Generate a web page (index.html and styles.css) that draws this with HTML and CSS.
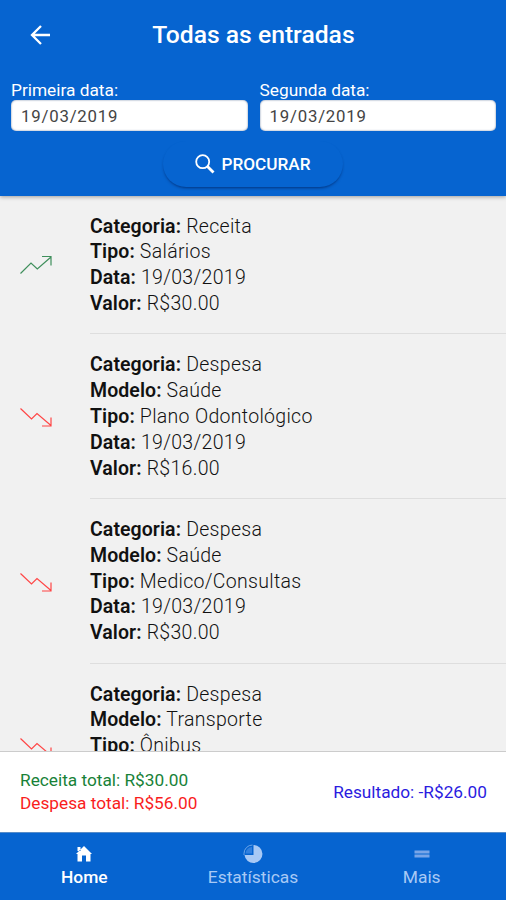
FILE: index.html
```html
<!DOCTYPE html>
<html lang="pt-BR">
<head>
<meta charset="utf-8">
<title>Todas as entradas</title>
<link rel="stylesheet" href="styles.css">
</head>
<body>
<svg class="defs" width="0" height="0">
  <symbol id="up" viewBox="0 0 34 22"><path d="M1.500 19.500 12 9l6.300 6L32 3M23 2.500h9V11.500"/></symbol>
  <symbol id="down" viewBox="0 0 34 22"><path d="M1.500 2.500 12.500 13l5.500-5.500L32 19.500M23 20h9V11.500"/></symbol>
</svg>
<div class="app">
  <header class="header">
    <div class="title-bar">
      <svg class="back" viewBox="0 0 20 20"><path d="M20 10H2M11 1 2 10l9 9"/></svg>
      <h1>Todas as entradas</h1>
    </div>
    <div class="dates">
      <label class="field"><span>Primeira data:</span><span class="date">19/03/2019</span></label>
      <label class="field"><span>Segunda data:</span><span class="date">19/03/2019</span></label>
    </div>
    <button class="search">
      <svg viewBox="0 0 20 20"><circle cx="7.700" cy="7.700" r="6.500"/><path class="handle" d="m12.500 12.500 6 6"/></svg>
      <span>PROCURAR</span>
    </button>
  </header>
  <main class="list">
    <article class="item">
      <svg class="trend income"><use href="#up"/></svg>
      <div class="info">
        <p><b>Categoria:</b> Receita</p>
        <p><b>Tipo:</b> Salários</p>
        <p><b>Data:</b> 19/03/2019</p>
        <p><b>Valor:</b> R$30.00</p>
      </div>
    </article>
    <article class="item">
      <svg class="trend expense"><use href="#down"/></svg>
      <div class="info">
        <p><b>Categoria:</b> Despesa</p>
        <p><b>Modelo:</b> Saúde</p>
        <p><b>Tipo:</b> Plano Odontológico</p>
        <p><b>Data:</b> 19/03/2019</p>
        <p><b>Valor:</b> R$16.00</p>
      </div>
    </article>
    <article class="item">
      <svg class="trend expense"><use href="#down"/></svg>
      <div class="info">
        <p><b>Categoria:</b> Despesa</p>
        <p><b>Modelo:</b> Saúde</p>
        <p><b>Tipo:</b> Medico/Consultas</p>
        <p><b>Data:</b> 19/03/2019</p>
        <p><b>Valor:</b> R$30.00</p>
      </div>
    </article>
    <article class="item last">
      <svg class="trend expense"><use href="#down"/></svg>
      <div class="info">
        <p><b>Categoria:</b> Despesa</p>
        <p><b>Modelo:</b> Transporte</p>
        <p><b>Tipo:</b> Ônibus</p>
      </div>
    </article>
  </main>
  <section class="totals">
    <div>
      <p class="total-in">Receita total: R$30.00</p>
      <p class="total-out">Despesa total: R$56.00</p>
    </div>
    <p class="result">Resultado: -R$26.00</p>
  </section>
  <nav class="tabs">
    <a class="tab active">
      <svg viewBox="0 0 18 18"><path class="solid" d="M9 1 1 9h1.500v7.500h4.500v-6h4v6h4.500V9H17ZM2.500 2h3v4h-3Z"/></svg>
      <span>Home</span>
    </a>
    <a class="tab">
      <svg class="pie" viewBox="0 0 20 20"><path class="ring" d="M9.500 1A8.500 8.500 0 0 0 1 9.500v1.500"/><path class="slice" d="M9 3v6.500H2.500A7 7 0 0 1 9 3Z"/><path class="solid" d="M10.500 1a9 9 0 1 1-9 10h9Z"/></svg>
      <span>Estatísticas</span>
    </a>
    <a class="tab">
      <svg viewBox="0 0 18 18"><path class="bars" d="M1.500 5.500h15v3h-15zM1.500 9.500h15v3h-15z"/></svg>
      <span>Mais</span>
    </a>
  </nav>
</div>
</body>
</html>
```
FILE: styles.css
```css
* { box-sizing: border-box; }
body { margin: 0; font-family: Roboto, "Liberation Sans", sans-serif; }
p, h1 { margin: 0; }
.defs { display: block; }
.app { height: 900px; display: flex; flex-direction: column; overflow: hidden; background: #f1f1f1; }
.header {
  height: 196px; flex: none; display: flex; flex-direction: column; align-items: center;
  background: #0664d0; color: #fff; z-index: 1;
  box-shadow: 0 1px 4px rgba(0, 0, 0, .35);
}
.title-bar {
  width: 100%; height: 70px; display: grid; align-items: center;
  grid-template-columns: 30px 1fr 30px; padding-right: 29px; padding-left: 30px;
}
.back { width: 20px; height: 20px; fill: none; stroke: #fff; stroke-width: 2.300; }
h1 { text-align: center; font-size: 24.700px; line-height: 30px; font-weight: 500; }
.dates { width: 100%; display: grid; grid-template-columns: 1fr 1fr; gap: 12px; padding: 11px 10px 0 11px; }
.field { display: flex; flex-direction: column; font-size: 17.300px; line-height: 19px; }
.date {
  height: 31px; border-radius: 5px; background: #fff; color: #444; padding-left: 10px;
  font-size: 16.800px; line-height: 32px; letter-spacing: .8px; box-shadow: inset 0 0 2px #657a9d;
}
.search {
  width: 180px; height: 46px; margin-top: 10px; border: 0; border-radius: 23px;
  background: #0664d0; color: #fff; display: flex; align-items: center; justify-content: center; gap: 6px;
  font: 500 17.200px Roboto, "Liberation Sans", sans-serif;
  box-shadow: 0 2px 3px -1px rgba(0, 20, 70, .6);
}
.search svg { width: 20px; height: 20px; fill: none; stroke: #fff; stroke-width: 1.800; }
.search .handle { stroke-width: 2.800; }
.list { flex: 1; min-height: 0; overflow: hidden; padding-top: 17.600px; }
.item { display: flex; padding-left: 19px; }
.trend { width: 34px; height: 22px; margin: 40.500px 37px 0 0; fill: none; stroke-width: 1.200; flex: none; }
.expense { margin-top: 54px; }
.income { stroke: #3f8f5c; }
.expense { stroke: #ff4545; }
.info {
  flex: 1; margin-bottom: 18px; padding-bottom: 16.600px; border-bottom: 1px solid #dedede;
  font-size: 19.500px; line-height: 25.800px; font-weight: 300; letter-spacing: .3px; color: #111;
}
.info b { font-weight: 600; letter-spacing: .08px; }
.last .info { border: 0; }
.totals {
  height: 81px; flex: none; display: flex; align-items: center; justify-content: space-between;
  padding: 0 19px 0 20px; background: #fff; border-top: 1px solid #ccc;
  font-size: 17.250px; line-height: 23px; z-index: 1;
}
.total-in { color: #188238; }
.total-out { color: #f91d1d; }
.result { color: #2a1be0; }
.tabs { height: 68px; flex: none; display: grid; grid-template-columns: repeat(3, 1fr); background: #0664d0; border-top: 1px solid #568cc9; }
.tab { display: flex; flex-direction: column; align-items: center; padding-top: 12px; color: #a8c9f5; font-size: 17.400px; line-height: 21px; }
.tab svg { width: 18px; height: 18px; margin-bottom: 4px; }
.tab .pie { width: 20px; height: 20px; margin: -1px 0 3px; }
.active { color: #fff; font-weight: 500; }
.solid { fill: currentColor; }
.ring { fill: none; stroke: #6da5e8; stroke-width: 1; }
.slice { fill: #3180df; }
.bars { fill: #78a5e8; }
```
